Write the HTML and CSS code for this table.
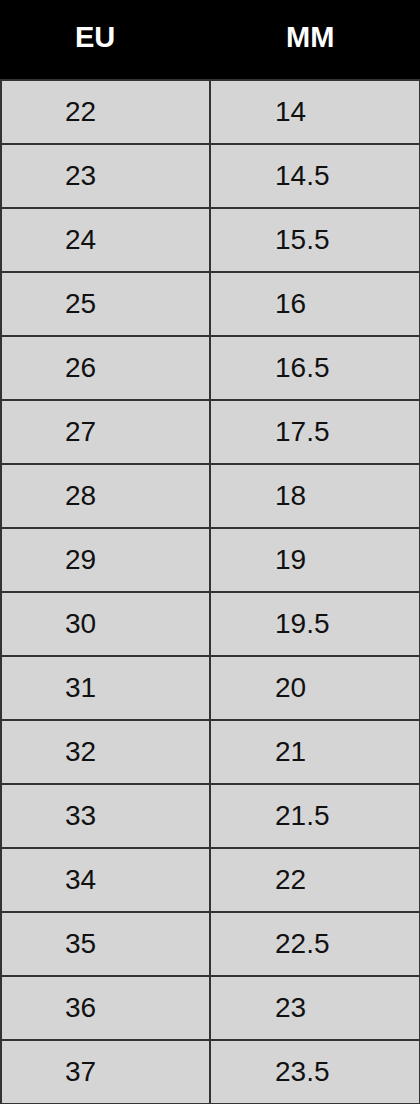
FILE: index.html
```html
<!DOCTYPE html>
<html lang="en">
<head>
<meta charset="utf-8">
<title>Size chart</title>
<link rel="stylesheet" href="styles.css">
</head>
<body>
<table class="size-table">
  <colgroup>
    <col class="col-eu">
    <col class="col-mm">
  </colgroup>
  <thead>
    <tr><th>EU</th><th>MM</th></tr>
  </thead>
  <tbody>
    <tr><td>22</td><td>14</td></tr>
    <tr><td>23</td><td>14.5</td></tr>
    <tr><td>24</td><td>15.5</td></tr>
    <tr><td>25</td><td>16</td></tr>
    <tr><td>26</td><td>16.5</td></tr>
    <tr><td>27</td><td>17.5</td></tr>
    <tr><td>28</td><td>18</td></tr>
    <tr><td>29</td><td>19</td></tr>
    <tr><td>30</td><td>19.5</td></tr>
    <tr><td>31</td><td>20</td></tr>
    <tr><td>32</td><td>21</td></tr>
    <tr><td>33</td><td>21.5</td></tr>
    <tr><td>34</td><td>22</td></tr>
    <tr><td>35</td><td>22.5</td></tr>
    <tr><td>36</td><td>23</td></tr>
    <tr><td>37</td><td>23.5</td></tr>
  </tbody>
</table>
</body>
</html>
```

FILE: styles.css
```css
html, body {
  margin: 0;
  padding: 0;
  background: #d6d5d6;
  overflow: hidden;
}

.size-table {
  border-collapse: separate;
  border-spacing: 0;
  width: 420px;
  table-layout: fixed;
  font-family: "Liberation Sans", Arial, sans-serif;
}

.col-eu { width: 211px; }
.col-mm { width: 209px; }

.size-table th {
  background: #000;
  color: #fff;
  font-weight: bold;
  font-size: 29px;
  line-height: 34px;
  padding: 20px 0 25px 75px;
  text-align: left;
  border-bottom: 2px solid #333;
}

.size-table td {
  background: #d6d5d6;
  color: #111;
  font-size: 28px;
  line-height: 32px;
  padding: 15px 0 15px 63px;
  text-align: left;
  border-bottom: 2px solid #333;
  border-right: 2px solid #333;
}

.size-table td:first-child {
  border-left: 2px solid #333;
}

.size-table td:last-child {
  border-right: 1px solid #333;
  padding-left: 64px;
}
```
